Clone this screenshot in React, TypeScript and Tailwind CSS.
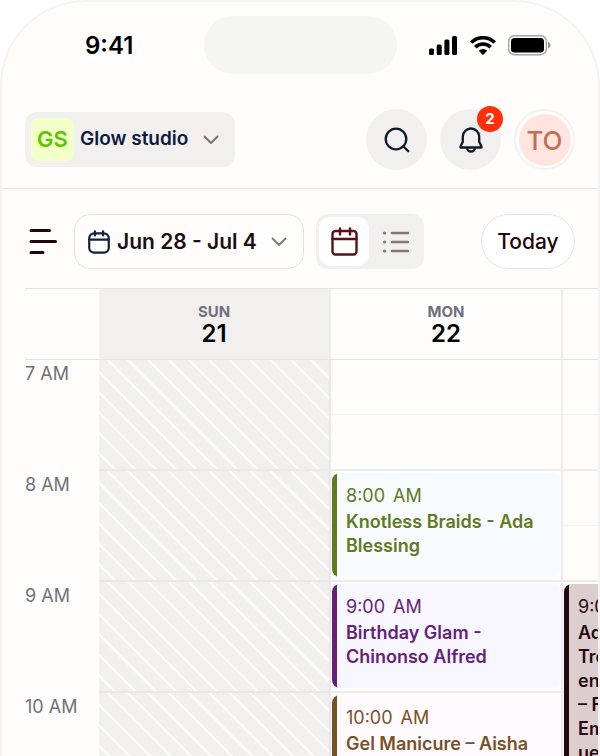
import { useState } from 'react';

type CalendarEvent = {
    time: string;
    lines: string[];
    tone: string;
    bar: string;
    height: string;
};

const hours = ['7 AM', '8 AM', '9 AM', '10 AM'];

const mondayEvents: Record<string, CalendarEvent> = {
    '8 AM': { time: '8:00', lines: ['Knotless Braids - Ada Blessing'], tone: 'bg-[#f7fbfd] text-[#5f7a1f]', bar: 'bg-[#5f7a1f]', height: 'h-[104px]' },
    '9 AM': { time: '9:00', lines: ['Birthday Glam - Chinonso Alfred'], tone: 'bg-[#f8f6ff] text-[#641f78]', bar: 'bg-[#641f78]', height: 'h-[104px]' },
    '10 AM': { time: '10:00', lines: ['Gel Manicure – Aisha'], tone: 'bg-[#fffafd] text-[#785127]', bar: 'bg-[#785127]', height: 'h-[104px]' },
};

const tuesdayEvents: Record<string, CalendarEvent> = {
    '9 AM': { time: '9:00', lines: ['Ad', 'Tre', 'en', '– F', 'Em', 'uel'], tone: 'bg-[#dccdce] text-[#260910]', bar: 'bg-[#260910]', height: 'h-[215px]' },
};

export default function App() {
    return (
        <div className="h-screen overflow-hidden bg-white font-['Inter',sans-serif]">
            <div className="h-full overflow-hidden rounded-t-[86px] border-2 border-b-0 border-[#f3f3f3] bg-[#fefdfc]">
                <StatusBar />
                <Header />
                <Toolbar />
                <Calendar />
            </div>
        </div>
    );
}

function StatusBar() {
    return (
        <div className="grid grid-cols-[1fr_193px_1fr] items-center pt-[14px]">
            <span className="pt-[2px] pl-[83px] text-2xl font-semibold text-black">9:41</span>
            <div className="h-[58px] rounded-full bg-[#f5f5f4]" />
            <div className="flex items-center justify-end gap-3 pr-[47px]">
                <svg width="29" height="19" viewBox="0 0 29 19" fill="#000">
                    <rect x="0" y="12.500" width="5" height="6.500" rx="1.500" />
                    <rect x="7.700" y="8.500" width="5" height="10.500" rx="1.500" />
                    <rect x="15.400" y="3.500" width="5" height="15.500" rx="1.500" />
                    <rect x="23" y="0" width="5" height="19" rx="1.500" />
                </svg>
                <svg width="26" height="19" viewBox="0 0 26 19" fill="none" stroke="#000" strokeWidth="3.600">
                    <path d="M1.300 6.600a16.500 16.500 0 0 1 23.400 0" />
                    <path d="M5.300 11.200a11 11 0 0 1 15.400 0" />
                    <path d="M8.800 14.700a6.200 6.200 0 0 1 8.400 0L13 18.900z" fill="#000" stroke="none" />
                </svg>
                <svg width="43" height="21" viewBox="0 0 43 21">
                    <rect x="0.700" y="0.700" width="37.600" height="19" rx="5.500" fill="none" stroke="#000" strokeOpacity="0.35" strokeWidth="1.400" />
                    <rect x="3" y="3" width="33" height="14.400" rx="3.500" fill="#000" />
                    <path d="M40 7v6.500c1.500-.5 2.500-1.800 2.500-3.200S41.500 7.500 40 7z" fill="#000" fillOpacity="0.4" />
                </svg>
            </div>
        </div>
    );
}

function Header() {
    return (
        <header className="flex items-center justify-between border-b border-[#e6e5e5] px-[23px] pt-[35px] pb-[18px]">
            <button className="flex h-[55px] w-[210px] items-center rounded-xl bg-[#f1f0ef] pl-[6px] text-[#0c1b3d]">
                <span className="flex h-[43px] w-[43px] items-center justify-center rounded-lg bg-[#f2ffc8] text-[22px] font-semibold text-[#5dc400]">GS</span>
                <span className="ml-[6px] text-[19px] font-semibold">Glow studio</span>
                <Chevron className="ml-[15px] text-[#7d7073]" />
            </button>
            <div className="flex items-center gap-[13px]">
                <button aria-label="Search" className="flex h-[61px] w-[61px] items-center justify-center rounded-full bg-[#f1f0ef] text-[#0f1728]">
                    <svg width="26" height="26" viewBox="0 0 26 26" fill="none" stroke="currentColor" strokeWidth="2.300" strokeLinecap="round">
                        <circle cx="12" cy="12" r="10.300" />
                        <path d="M19.300 19.300l5 5" />
                    </svg>
                </button>
                <button aria-label="Notifications" className="relative flex h-[61px] w-[61px] items-center justify-center rounded-full bg-[#f1f0ef] text-[#0f1728]">
                    <svg width="24" height="26" viewBox="0 0 24 26" fill="none" stroke="currentColor" strokeWidth="2.300" strokeLinejoin="round">
                        <path d="M12 1.500a8.200 8.200 0 0 0-8.200 8v5.200L1.500 19.500v1h21v-1l-2.300-4.800V9.500a8.200 8.200 0 0 0-8.200-8z" />
                        <path d="M8 20.500a4 4 0 0 0 8 0" />
                    </svg>
                    <span className="absolute -top-[3px] -right-[2px] flex h-[26px] w-[26px] items-center justify-center rounded-full bg-[#ff2f0b] text-[15px] font-bold text-white">2</span>
                </button>
                <button aria-label="Account" className="flex h-[61px] w-[61px] items-center justify-center rounded-full border-2 border-[#f3f2f2] bg-white">
                    <span className="flex h-[52px] w-[52px] shrink-0 items-center justify-center rounded-full bg-[#ffe5de] pt-[2px] text-[26px] font-medium text-[#c27055]">TO</span>
                </button>
            </div>
        </header>
    );
}

function Toolbar() {
    const [view, setView] = useState('calendar');

    return (
        <div className="flex items-center px-[23px] pt-[25px] pb-[19px]">
            <button aria-label="Menu" className="ml-[3px] text-[#220609]">
                <svg width="30" height="27" viewBox="0 0 30 27" fill="none" stroke="currentColor" strokeWidth="3" strokeLinecap="round">
                    <path d="M3 2.500h18.500M3 13.500h24.500M3 24.500h12" />
                </svg>
            </button>
            <button className="ml-4 flex h-[55px] w-[230px] items-center rounded-2xl border border-[#e4e3e3] pl-[13px] text-[#220d12]">
                <CalendarIcon className="h-6 w-[22px] text-[#14203f]" round />
                <span className="ml-[7px] text-[21px] font-semibold">Jun 28 - Jul 4</span>
                <Chevron className="ml-[14px] text-[#7d7d7d]" />
            </button>
            <div className="ml-3 flex h-[55px] w-[108px] items-center rounded-xl bg-[#f1f0ef] p-[3px]">
                <button aria-label="Calendar view" onClick={() => setView('calendar')} className={`flex h-[49px] w-[50px] items-center justify-center rounded-xl text-[#561319] ${view === 'calendar' ? 'bg-white' : ''}`}>
                    <CalendarIcon className="h-[29px] w-[27px]" />
                </button>
                <button aria-label="List view" onClick={() => setView('list')} className={`flex h-[49px] flex-1 items-center justify-center rounded-xl text-[#84757a] ${view === 'list' ? 'bg-white' : ''}`}>
                    <svg width="27" height="22" viewBox="0 0 27 22" fill="none" stroke="currentColor" strokeWidth="2.600" strokeLinecap="round">
                        <path d="M10 2h16M10 11h16M10 20h16" />
                        <path strokeWidth="3.200" d="M2.500 2h.1M2.500 11h.1M2.500 20h.1" />
                    </svg>
                </button>
            </div>
            <button className="ml-auto h-[55px] w-[94px] rounded-full border border-[#e4e3e3] bg-white text-[21px] font-medium text-[#220609]">Today</button>
        </div>
    );
}

function Calendar() {
    return (
        <div className="ml-[23px] overflow-hidden">
            <div className="grid grid-cols-[74px_232px_232px_232px] border-y border-[#e4e3e3]">
                <div />
                <DayHeading day="SUN" date="21" className="bg-[#f1f0ef]" />
                <DayHeading day="MON" date="22" />
                <div />
            </div>
            {hours.map((hour) => (
                <div key={hour} className="grid h-[111px] grid-cols-[74px_232px_232px_232px]">
                    <div className="text-lg text-[#71717a]">{hour}</div>
                    <ClosedSlot id={`hatch-${hour.replace(' ', '')}`} />
                    <Slot event={mondayEvents[hour]} />
                    <Slot event={tuesdayEvents[hour]} />
                </div>
            ))}
        </div>
    );
}

function DayHeading({ day, date, className = '' }: { day: string; date: string; className?: string }) {
    return (
        <div className={`flex h-[70px] flex-col items-center justify-center border-r-2 border-[#ececec] ${className}`}>
            <span className="text-[15px] leading-5 font-bold text-[#71717a]">{day}</span>
            <span className="text-2xl leading-6 font-semibold text-black">{date}</span>
        </div>
    );
}

// hatched hour on a day the studio is closed
function ClosedSlot({ id }: { id: string }) {
    return (
        <div className="border-r-2 border-b-2 border-[#e9e8e8] bg-[#f1f0ef]">
            <svg className="h-[109px] w-full" aria-hidden="true">
                <defs>
                    <pattern id={id} width="20.400" height="20.400" patternUnits="userSpaceOnUse">
                        <path d="M6.500-2l24.400 24.400M-13.900-2l24.400 24.400" stroke="#fff" strokeWidth="2" />
                    </pattern>
                </defs>
                <rect width="100%" height="100%" fill={`url(#${id})`} />
            </svg>
        </div>
    );
}

function Slot({ event }: { event?: CalendarEvent }) {
    return (
        <div className="relative border-r-2 border-b-2 border-[#ececec]">
            <div className="h-[55px] border-b border-[#f5f4f4]" />
            {event && (
                <div className={`absolute top-[2px] right-0 left-px z-10 flex overflow-hidden rounded-lg ${event.height} ${event.tone}`}>
                    <div className={`w-[5px] shrink-0 ${event.bar}`} />
                    <div className="px-[9px] pt-[11px] text-lg leading-6">
                        <div className="mb-[2px] flex gap-2">
                            <span>{event.time}</span>
                            <span>AM</span>
                        </div>
                        {event.lines.map((line) => (
                            <div key={line} className="font-semibold">{line}</div>
                        ))}
                    </div>
                </div>
            )}
        </div>
    );
}

function Chevron({ className }: { className: string }) {
    return (
        <svg width="16" height="10" viewBox="0 0 16 10" fill="none" stroke="currentColor" strokeWidth="1.900" strokeLinecap="round" strokeLinejoin="round" className={className}>
            <path d="M1.500 1.500L8 8l6.500-6.500" />
        </svg>
    );
}

function CalendarIcon({ className, round = false }: { className: string; round?: boolean }) {
    return (
        <svg viewBox="0 0 27 29" fill="none" stroke="currentColor" strokeWidth={round ? 2.7 : 2.4} strokeLinecap="round" className={className}>
            <rect x="1.500" y="4" width="24" height="23.500" rx={round ? 6 : 3} />
            <path d={round ? 'M1.500 11.500h24M8.500 1.500v5M18.500 1.500v5' : 'M1.500 12h24M9 1.500v6M19 1.500v6'} />
        </svg>
    );
}
